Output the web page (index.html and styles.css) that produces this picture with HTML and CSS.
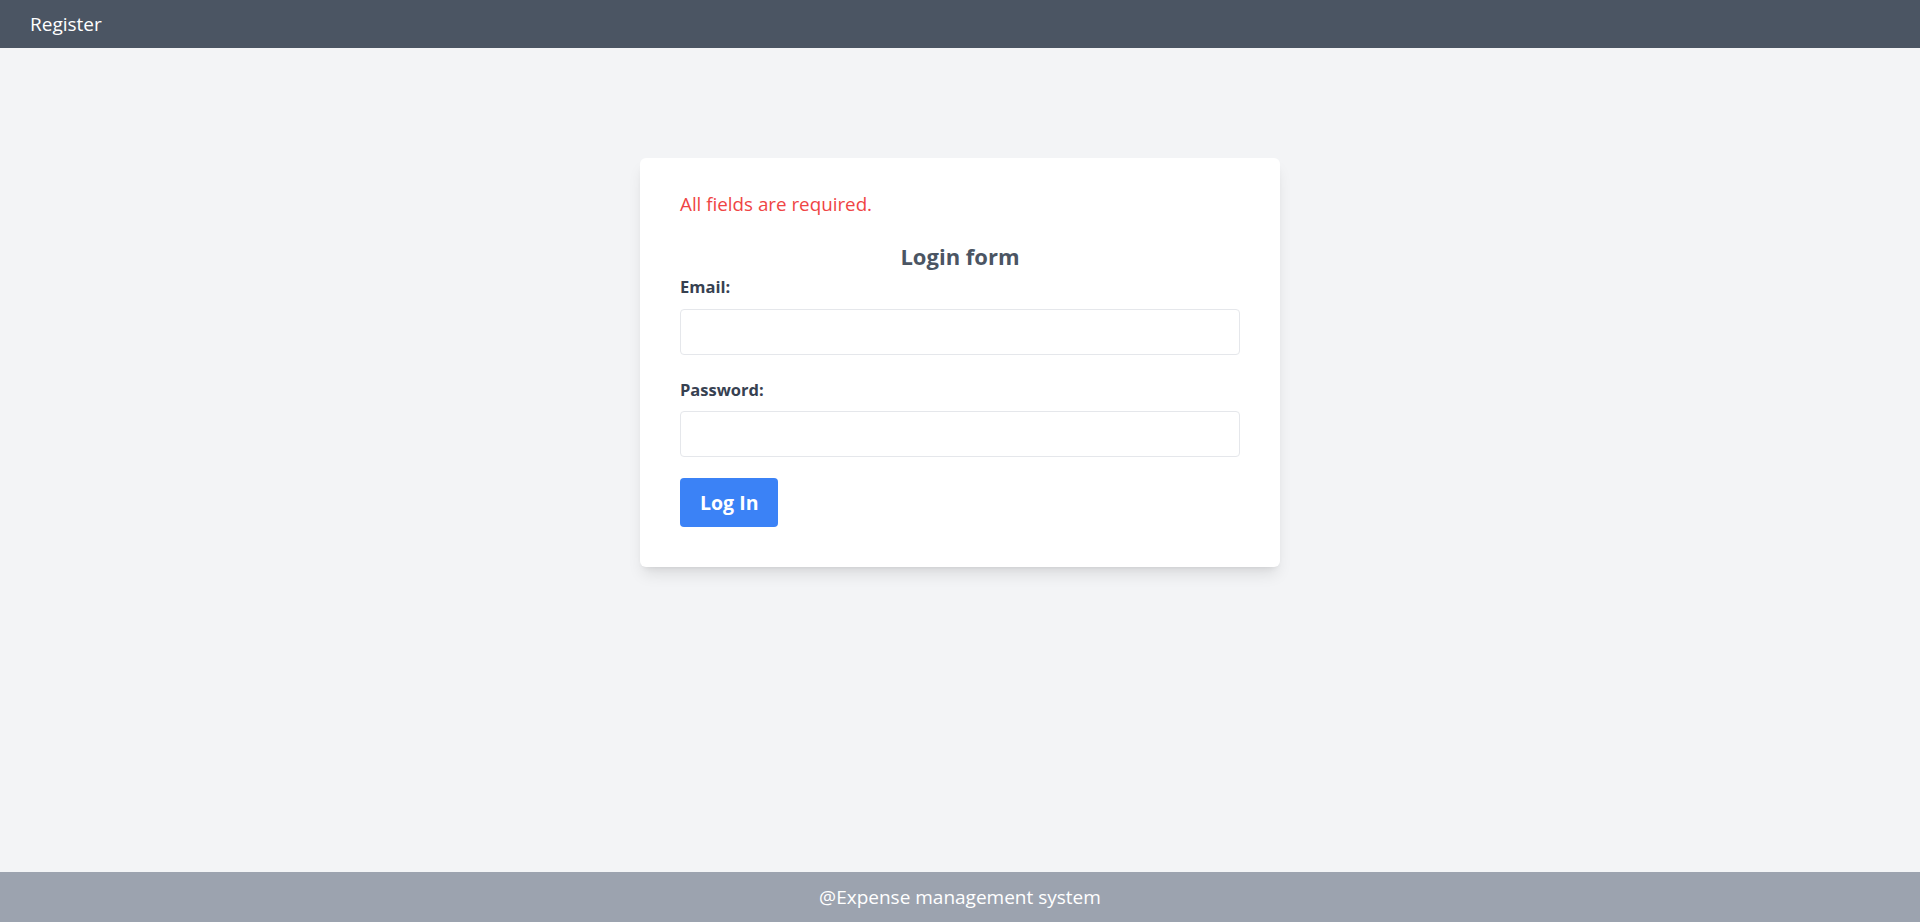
FILE: index.html
```html
<!DOCTYPE html>
<html lang="en">
<head>
<meta charset="utf-8">
<title>Login</title>
<link rel="stylesheet" href="styles.css">
</head>
<body>
<div class="page">
  <header class="topbar">
    <a class="nav-link" href="#">Register</a>
  </header>
  <main class="main">
    <div class="card">
      <p class="error">All fields are required.</p>
      <h2 class="title">Login form</h2>
      <form class="form">
        <div class="group group-email">
          <label class="label" for="email">Email:</label>
          <input class="input" id="email" type="email">
        </div>
        <div class="group group-password">
          <label class="label" for="password">Password:</label>
          <input class="input" id="password" type="password">
        </div>
        <button class="btn" type="button">Log In</button>
      </form>
    </div>
  </main>
  <footer class="footer">@Expense management system</footer>
</div>
</body>
</html>
```

FILE: styles.css
```css
* { box-sizing: border-box; }
html, body { margin: 0; padding: 0; }
body {
  font-family: "Open Sans", "Noto Sans", "Liberation Sans", sans-serif;
  background: #f3f4f6;
  color: #374151;
}
.page {
  min-height: 100vh;
  display: flex;
  flex-direction: column;
}
.topbar {
  background: #4b5563;
  height: 48px;
  padding: 0 30px;
  display: flex;
  align-items: center;
}
.nav-link {
  color: #ffffff;
  text-decoration: none;
  font-size: 19px;
  line-height: 28px;
}
.main {
  flex: 1;
  display: flex;
  justify-content: center;
  align-items: flex-start;
  padding-top: 110px;
}
.card {
  width: 640px;
  background: #ffffff;
  border-radius: 6px;
  padding: 32px 40px 40px;
  box-shadow: 0 10px 15px -3px rgba(0,0,0,0.1), 0 4px 6px -4px rgba(0,0,0,0.1);
}
.error {
  margin: 0 0 22px;
  color: #ef4444;
  font-size: 18.8px;
  line-height: 28px;
}
.title {
  margin: 0 0 3px;
  text-align: center;
  font-size: 22px;
  line-height: 32px;
  font-weight: 700;
  color: #4b5563;
}
.form { margin: 0; }
.group { display: flex; flex-direction: column; }
.group-email { margin-bottom: 23px; }
.group-password { margin-bottom: 21px; }
.label {
  font-size: 16.5px;
  line-height: 24px;
  font-weight: 700;
  color: #374151;
  margin-bottom: 10px;
}
.group-password .label { margin-bottom: 9px; }
.input {
  height: 46px;
  width: 100%;
  border: 1px solid #e5e7eb;
  border-radius: 4px;
  padding: 0 12px;
  font-size: 16px;
  font-family: inherit;
  background: #fff;
  outline: none;
}
.btn {
  display: block;
  background: #3b82f6;
  color: #ffffff;
  border: none;
  border-radius: 4px;
  height: 49px;
  padding: 0 20px;
  font-family: inherit;
  font-size: 19.5px;
  font-weight: 700;
  cursor: pointer;
}
.footer {
  background: #9ca3af;
  color: #ffffff;
  text-align: center;
  font-size: 19px;
  line-height: 28px;
  padding: 11px 0;
}
```
